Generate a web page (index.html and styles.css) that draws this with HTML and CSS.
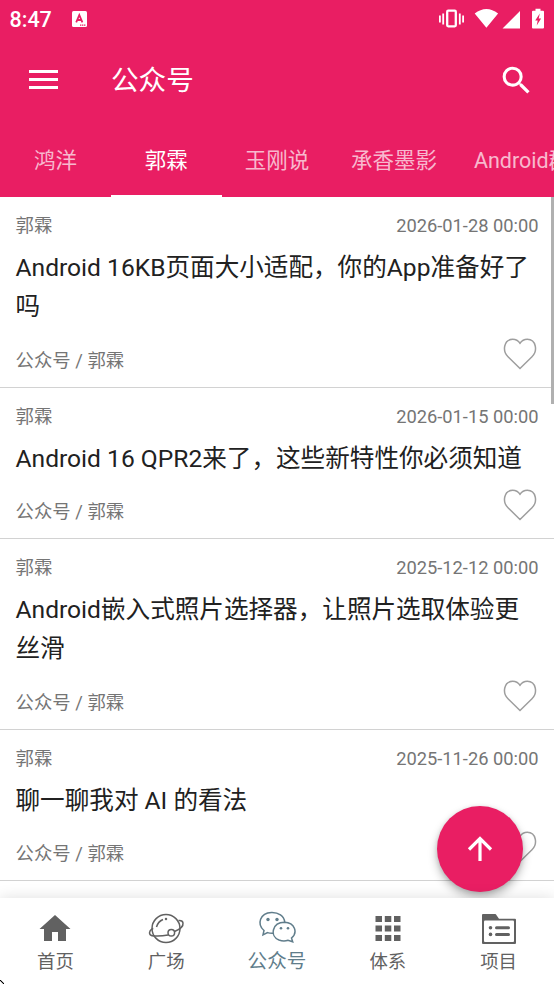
FILE: index.html
```html
<!DOCTYPE html>
<html lang="zh-CN">
<head>
<meta charset="utf-8">
<title>公众号</title>
<link rel="stylesheet" href="styles.css">
</head>
<body>
<div class="app">
  <header class="header">
    <div class="status">
      <span class="clock">8:47</span>
      <svg class="badge-a" width="15" height="16" viewBox="0 0 15 16"><rect width="15" height="16" rx="1.5" fill="#fff"/><path d="M4.200 11.300 7.300 4l3.100 7.300M5.300 9h4" fill="none" stroke="#e91e63" stroke-width="1.800"/><path d="M8 14.200h5.500" stroke="#e91e63" stroke-width="1.200" stroke-dasharray="1.400 .6"/></svg>
      <svg class="status-icons" width="108" height="24" viewBox="0 0 108 24">
        <g fill="none" stroke="#fff"><rect x="9.200" y="3.700" width="8.600" height="15.600" rx="1" stroke-width="2.300"/><path d="M5.200 6.500v11M21.800 6.500v11M1.900 8.500v7M25.100 8.500v7" stroke-width="1.800"/></g>
        <path d="M36.700 6.500q11.700-9 23.400 0L48.400 20.700ZM64.500 21.500 82 4v17.500Z" fill="#fff"/>
        <path d="M97.500 1.800h5v2h2.500q1 0 1 1v15.700q0 1-1 1H95q-1 0-1-1V4.800q0-1 1-1h2.500Z" fill="#fff"/>
        <path d="m101.800 6.500-4.600 7h2.500l-1 5 4.400-7h-2.400Z" fill="#e91e63"/>
      </svg>
    </div>
    <div class="toolbar">
      <svg class="menu" width="29" height="20" viewBox="0 0 29 20"><path d="M0 1.500h29M0 9.500h29M0 17.500h29" stroke="#fff" stroke-width="3"/></svg>
      <h1>公众号</h1>
      <svg class="search" width="37" height="37" viewBox="0 0 24 24" fill="#fff"><path d="M15.5 14h-.79l-.28-.27A6.471 6.471 0 0 0 16 9.5 6.5 6.5 0 1 0 9.5 16c1.61 0 3.09-.59 4.23-1.57l.27.28v.79l5 4.99L20.49 19l-4.99-5zm-6 0C7.01 14 5 11.99 5 9.5S7.01 5 9.5 5 14 7.01 14 9.5 11.990 14 9.500 14z"/></svg>
    </div>
    <nav class="tabs">
      <span class="tab">鸿洋</span><span class="tab active">郭霖</span><span class="tab">玉刚说</span><span class="tab">承香墨影</span><span class="tab">Android群英传</span>
    </nav>
  </header>

  <main class="list">
    <article class="item tall">
      <div class="meta"><span>郭霖</span><time>2026-01-28 00:00</time></div>
      <h2>Android 16KB页面大小适配，你的App准备好了吗</h2>
      <div class="foot"><span>公众号 / 郭霖</span><svg class="heart" viewBox="0 0 34 32"><path d="M17 30.500 5 18.700C-.8 13.200.6 1.500 9.700 1.300c3 0 5.500 1.300 7.300 3.900 1.800-2.600 4.300-3.900 7.300-3.900 9.100.2 10.500 11.900 4.700 17.400Z"/></svg></div>
    </article>
    <article class="item">
      <div class="meta"><span>郭霖</span><time>2026-01-15 00:00</time></div>
      <h2>Android 16 QPR2来了，这些新特性你必须知道</h2>
      <div class="foot"><span>公众号 / 郭霖</span><svg class="heart" viewBox="0 0 34 32"><path d="M17 30.500 5 18.700C-.8 13.200.6 1.500 9.700 1.300c3 0 5.500 1.300 7.300 3.900 1.800-2.600 4.300-3.900 7.300-3.900 9.100.2 10.500 11.900 4.700 17.400Z"/></svg></div>
    </article>
    <article class="item tall">
      <div class="meta"><span>郭霖</span><time>2025-12-12 00:00</time></div>
      <h2>Android嵌入式照片选择器，让照片选取体验更丝滑</h2>
      <div class="foot"><span>公众号 / 郭霖</span><svg class="heart" viewBox="0 0 34 32"><path d="M17 30.500 5 18.700C-.8 13.200.6 1.500 9.700 1.300c3 0 5.500 1.300 7.300 3.900 1.800-2.600 4.300-3.900 7.300-3.900 9.100.2 10.500 11.900 4.700 17.400Z"/></svg></div>
    </article>
    <article class="item">
      <div class="meta"><span>郭霖</span><time>2025-11-26 00:00</time></div>
      <h2>聊一聊我对 AI 的看法</h2>
      <div class="foot"><span>公众号 / 郭霖</span><svg class="heart" viewBox="0 0 34 32"><path d="M17 30.500 5 18.700C-.8 13.200.6 1.500 9.700 1.300c3 0 5.500 1.300 7.300 3.900 1.800-2.600 4.300-3.900 7.300-3.900 9.100.2 10.500 11.900 4.700 17.400Z"/></svg></div>
    </article>
    <div class="scrollbar"></div>
  </main>

  <div class="fab"><svg width="26" height="26" viewBox="0 0 26 26"><path d="M13 25V3M2 13.500 13 2.500l11 11" fill="none" stroke="#fff" stroke-width="3.200"/></svg></div>

  <nav class="bottom">
    <div class="dest"><svg width="40" height="36" viewBox="0 0 40 36"><path d="M20 5 35.500 19H31v12h-8v-9h-6v9H9V19H4.500Z" fill="#616161"/></svg><span>首页</span></div>
    <div class="dest"><svg width="40" height="36" viewBox="0 0 40 36" fill="none" stroke="#616161" stroke-width="1.500"><circle cx="20" cy="18.500" r="14"/><path d="M10.500 17q1.500-5.500 6.500-7.500"/><circle cx="20" cy="9" r=".5"/><path d="M7.300 18.500C4.500 19 2.700 22.500 4 24.500c1.500 2.500 12.500 1.500 18 .5M28.500 21.500c5-2 9-5 8.500-8.500-.2-1.900-2-2.700-4.500-2.500"/><circle cx="25.300" cy="22.800" r="3.300"/></svg><span>广场</span></div>
    <div class="dest current"><svg width="40" height="36" viewBox="0 0 40 36" fill="none" stroke="#607d8b" stroke-width="1.500"><path d="M16.500 23.300q-3 .3-6-.7L6 24.800l1-4.300C-.5 14 3 3 14.500 2.500 21.500 2.300 27 6 27.700 12"/><path d="M34.500 28C41 22.500 38 12.600 27.500 12.300 15 12.500 12.500 26 22 30q4.500 1.600 9 .3l4.700 1.500Z"/><g fill="#607d8b" stroke="none"><circle cx="11" cy="9.500" r="1.700"/><circle cx="20" cy="9.500" r="1.700"/><circle cx="24" cy="18.300" r="1.300"/><circle cx="31" cy="18.300" r="1.300"/></g></svg><span>公众号</span></div>
    <div class="dest"><svg width="40" height="36" viewBox="0 0 40 36"><path d="M7.500 6H14v6H7.500zm9.300 0h6.500v6h-6.500zM26 6h6.500v6H26zM7.500 15.500H14v6H7.500zm9.300 0h6.500v6h-6.500zm9.200 0h6.500v6H26zM7.500 25H14v6H7.500zm9.300 0h6.500v6h-6.500zM26 25h6.500v6H26z" fill="#616161"/></svg><span>体系</span></div>
    <div class="dest"><svg width="40" height="36" viewBox="0 0 40 36"><path d="M3 33V5q0-1 1-1h12q1 0 1.700 1.400L20 8.700h16q1 0 1 1V33q0 1-1 1H4q-1 0-1-1Z" fill="#616161"/><rect x="5" y="10.500" width="30" height="21.500" rx="1" fill="#fff"/><path d="M17.500 17.800h12M17.500 24.400h12" stroke="#616161" stroke-width="3" stroke-linecap="round"/><circle cx="11.500" cy="17.800" r="1.800" fill="#616161"/><circle cx="11.500" cy="24.400" r="1.800" fill="#616161"/></svg><span>项目</span></div>
    <svg class="pointer" width="4" height="4" viewBox="0 0 4 4"><path d="M0 .5h1v1h1v1h1v1h1" fill="none" stroke="#000"/></svg>
  </nav>
</div>
</body>
</html>
```

FILE: styles.css
```css
* { box-sizing: border-box; }
body { margin: 0; font-family: Roboto, "Noto Sans CJK SC", sans-serif; background: #fff; }
svg { display: block; flex: none; }
h1, h2 { margin: 0; font-weight: 400; }
.app { position: relative; width: 554px; height: 984px; overflow: hidden; display: flex; flex-direction: column; }
.header { flex: none; height: 197px; background: #e91e63; color: #fff; display: flex; flex-direction: column; }
.status { height: 37px; display: flex; align-items: center; padding: 0 8px 0 9.5px; }
.clock { width: 62.5px; font-size: 21.5px; font-weight: 500; line-height: 38px; padding-top: 2px; }
.status-icons { margin-left: auto; margin-bottom: 0; }
.toolbar { height: 86px; display: flex; align-items: center; padding: 0 19px 0 29px; }
.toolbar h1 { margin-left: 53px; font-size: 27.6px; line-height: 40px; padding-top: 2px; }
.search { margin-left: auto; }
.tabs { height: 74px; display: flex; overflow: hidden; }
.tab { flex: none; min-width: 110.8px; padding: 0 18.5px; font-size: 21.5px; line-height: 75px; text-align: center; color: rgba(255,255,255,.7); white-space: nowrap; }
.tab.active { height: 74px; color: #fff; border-bottom: 2px solid #fff; }
.list { position: relative; flex: 1; min-height: 0; overflow: hidden; }
.item { height: 151px; padding: 15px 15.5px 0 15.5px; border-bottom: 1px solid #d2d2d2; display: flex; flex-direction: column; }
.item.tall { height: 191px; }
.meta { display: flex; justify-content: space-between; height: 28px; font-size: 18.4px; line-height: 28px; color: #757575; }
.meta time { font-size: 18.3px; }
.item h2 { margin-top: 8px; font-size: 24.6px; line-height: 39px; color: #212121; }
.foot { margin-top: auto; height: 53px; display: flex; justify-content: space-between; font-size: 18.4px; line-height: 53px; color: #757575; }
.heart { width: 34px; height: 32px; margin: 3.500px 1.5px 0 0; fill: none; stroke: #9e9e9e; stroke-width: 1.5; }
.scrollbar { position: absolute; right: 0; top: 0; width: 3px; height: 207px; background: #b0b0b0; }
.fab { position: absolute; left: 437px; top: 806px; width: 86px; height: 86px; border-radius: 50%; background: #e91e63; display: flex; align-items: center; justify-content: center; box-shadow: 0 5px 10px rgba(0,0,0,.28), 0 1px 4px rgba(0,0,0,.12); }
.bottom { position: relative; flex: none; height: 86px; background: #fff; display: flex; box-shadow: 0 0 14px rgba(0,0,0,.13); }
.dest { flex: 1; display: flex; flex-direction: column; align-items: center; padding-top: 12px; color: #616161; font-size: 18.4px; line-height: 32px; }
.current { color: #607d8b; }
.current span { font-size: 19.6px; }
.pointer { position: absolute; left: 0; bottom: 0; }
```
